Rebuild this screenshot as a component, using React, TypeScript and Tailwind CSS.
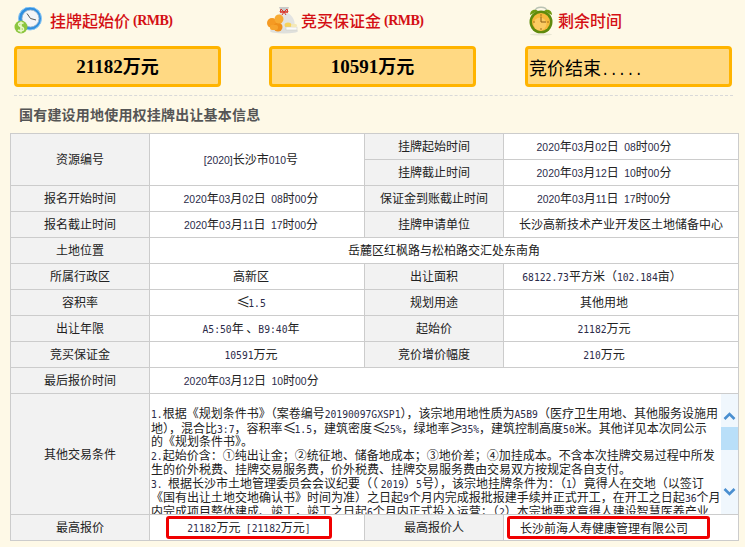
const cjk = "font-['Noto_Sans_CJK_SC',sans-serif]";

// digits and latin are a smaller size than the CJK text in this table
function Mixed({ text, sans }: { text: string; sans?: boolean }) {
  const parts = text.split(/([\x21-\x7e]+|[≤≥])/);
  return (
    <>
      {parts.map((p, i) => {
        if (p === "≤" || p === "≥") {
          return (
            <span key={i} className="inline-block w-[12px] text-center text-[14px] leading-none">
              {p}
            </span>
          );
        }
        if (/^[\x21-\x7e]+$/.test(p)) {
          return (
            <span
              key={i}
              className={
                sans
                  ? "font-['Liberation_Sans',sans-serif] text-[10.4px] text-[#2b2b4a]"
                  : "font-['DejaVu_Sans_Mono',monospace] text-[9.7px] text-[#2b2b4a]"
              }
            >
              {p}
            </span>
          );
        }
        return <span key={i}>{p}</span>;
      })}
    </>
  );
}

function ClockIcon() {
  return (
    <svg width="28" height="27" viewBox="0 0 28 27" className="shrink-0">
      <circle cx="16" cy="11.5" r="11.5" fill="#2f8fe0" />
      <circle cx="16" cy="11.5" r="11.5" fill="none" stroke="#8cc8f5" strokeWidth="1" />
      <circle cx="16.5" cy="11.5" r="8.5" fill="#f4f5f7" stroke="#9db4c8" strokeWidth="0.8" />
      <path d="M16.5 11.5 L13 6.5 M16.5 11.5 L22 13" stroke="#555" strokeWidth="1" fill="none" />
      <circle cx="7" cy="20" r="6.5" fill="#8cc63f" />
      <path d="M9.5 16.5 C7 15 4 16 4.8 18 C5.5 20 9.5 19.5 9.6 22 C9.6 24 6 24.5 4 23 M7 14.5 V25.5" stroke="#e9f7c8" strokeWidth="1.6" fill="none" />
    </svg>
  );
}

function MoneyIcon() {
  return (
    <svg width="33" height="28" viewBox="0 0 33 28" className="shrink-0">
      <path d="M14 7 C10 11 9 18 12 23 H27 C31 17 27 10 22 7 Z" fill="#e3e4e2" />
      <path d="M13 1 H23 L21 6 H15 Z" fill="#c9cac8" />
      <path d="M14 6 H22" stroke="#d9362b" strokeWidth="1.6" />
      <path d="M18 6 L15 3 L14 6 M18 6 L21 3 L22 6 M18 6 L16 9 M18 6 L20 9" stroke="#d9362b" strokeWidth="1" fill="none" />
      <ellipse cx="18" cy="25" rx="14" ry="2.6" fill="#dfe0dc" />
      <circle cx="6" cy="17" r="5" fill="#f59a23" />
      <circle cx="12" cy="21" r="4.5" fill="#ef8f1a" />
      <circle cx="13" cy="13" r="4.5" fill="#f8ab32" />
      <rect x="4" y="19" width="8" height="5" rx="2" fill="#f7a42c" />
      <ellipse cx="22" cy="19" rx="3.5" ry="2.5" fill="#f7d35a" />
      <rect x="20" y="21" width="11" height="3" fill="#fafafa" stroke="#c9c9c0" strokeWidth="0.5" />
      <ellipse cx="28" cy="19.5" rx="3" ry="1.8" fill="#f4e9b8" />
    </svg>
  );
}

function AlarmIcon() {
  return (
    <svg width="26" height="31" viewBox="0 0 26 31" className="shrink-0">
      <path d="M7 6 C8 1 18 1 19 6" stroke="#b9c2b4" strokeWidth="1.3" fill="none" />
      <path d="M2 10 C2 5 7 3.5 10 6 Z" fill="#6f9a10" />
      <path d="M24 10 C24 5 19 3.5 16 6 Z" fill="#6f9a10" />
      <circle cx="13" cy="17" r="11.5" fill="#5f8a0c" />
      <circle cx="13" cy="17" r="9" fill="#f7b93b" />
      <circle cx="12" cy="19" r="6.5" fill="#fbcb62" />
      <path d="M13 9 V11 M13 23 V25 M5 17 H7 M19 17 H21" stroke="#a9701a" strokeWidth="1" />
      <path d="M13 17 V11.5 M13 17 H18" stroke="#8a5a12" strokeWidth="1" fill="none" />
      <ellipse cx="13" cy="29.5" rx="11" ry="1" fill="#e8e6d4" />
    </svg>
  );
}

function Label({ children, rowSpan }: { children: string; rowSpan?: number }) {
  return (
    <td rowSpan={rowSpan} className="h-[26px] border border-[#cccccc] bg-[#f2f2f2] p-0 pb-px text-center text-[12px] text-[#222]">
      {children}
    </td>
  );
}

function Value({
  text,
  sans,
  rowSpan,
  colSpan,
  className = "",
}: {
  text: string;
  sans?: boolean;
  rowSpan?: number;
  colSpan?: number;
  className?: string;
}) {
  return (
    <td
      rowSpan={rowSpan}
      colSpan={colSpan}
      className={`h-[26px] whitespace-pre border border-[#cccccc] bg-white p-0 pb-px text-center text-[12px] text-[#222] ${className}`}
    >
      <Mixed text={text} sans={sans} />
    </td>
  );
}

const conditionLines = [
  "1.根据《规划条件书》（案卷编号20190097GXSP1），该宗地用地性质为A5B9（医疗卫生用地、其他服务设施用",
  "地），混合比3:7，容积率≤1.5，建筑密度≤25%，绿地率≥35%，建筑控制高度50米。其他详见本次同公示",
  "的《规划条件书》。",
  "2.起始价含：①纯出让金；②统征地、储备地成本；③地价差；④加挂成本。不含本次挂牌交易过程中所发",
  "生的价外税费、挂牌交易服务费，价外税费、挂牌交易服务费由交易双方按规定各自支付。",
  "3.  根据长沙市土地管理委员会会议纪要（（ 2019）5号），该宗地挂牌条件为：（1）竟得人在交地（以签订",
  "《国有出让土地交地确认书》时间为准）之日起9个月内完成报批报建手续并正式开工，在开工之日起36个月",
  "内完成项目整体建成、竣工，竣工之日起6个月内正式投入运营；（2）本宗地要求竟得人建设智慧医养产业",
];

export default function App() {
  return (
    <div className={`h-[547px] w-[745px] overflow-hidden bg-[#fef9e7] ${cjk}`}>
      {/* top summary */}
      <div className="flex gap-[48px] pl-[14px]">
        <div className="w-[207px]">
          <div className="flex h-[46px] items-center pb-[6px]">
            <ClockIcon />
            <span className="ml-[8px] text-[16px] font-medium leading-none text-[#d40f14]">挂牌起始价</span>
            <span className="ml-[3px] font-['Liberation_Serif',serif] text-[14px] font-bold tracking-[-0.5px] text-[#d40f14]">(RMB)</span>
          </div>
          <div className="flex h-[41px] items-center justify-center rounded-[4px] border-[3px] border-[#ffb400] bg-[#ffd983] text-[18px] font-bold text-black">
            <span>
              <span className="font-['Liberation_Serif',serif] text-[19px]">21182</span>万元
            </span>
          </div>
        </div>
        <div className="w-[207px]">
          <div className="-ml-[3px] flex h-[46px] items-center pb-[6px]">
            <MoneyIcon />
            <span className="ml-[2px] text-[16px] font-medium leading-none text-[#d40f14]">竞买保证金</span>
            <span className="ml-[3px] font-['Liberation_Serif',serif] text-[14px] font-bold tracking-[-0.5px] text-[#d40f14]">(RMB)</span>
          </div>
          <div className="flex h-[41px] items-center justify-center rounded-[4px] border-[3px] border-[#ffb400] bg-[#ffd983] text-[18px] font-bold text-black">
            <span>
              <span className="font-['Liberation_Serif',serif] text-[19px]">10591</span>万元
            </span>
          </div>
        </div>
        <div className="ml-px w-[207px]">
          <div className="ml-[3px] flex h-[46px] items-center pb-[6px]">
            <AlarmIcon />
            <span className="ml-[4px] text-[16px] font-medium leading-none text-[#d40f14]">剩余时间</span>
          </div>
          <div className="flex h-[41px] items-center rounded-[4px] border-[3px] border-[#ffb400] bg-[#ffd983] pl-px pt-[3px] text-[18px] text-black">
            <span>
              竞价结束<span className="font-['Liberation_Mono',monospace] text-[14px]">.....</span>
            </span>
          </div>
        </div>
      </div>

      <div className="ml-[14px] mt-[8px] w-[719px] border-t border-dashed border-[#d9d9d9]" />

      <div className="h-[37px] pl-[19px] text-[14px] font-bold leading-[36px] tracking-[0.2px] text-[#555]">国有建设用地使用权挂牌出让基本信息</div>

      <table className="ml-[10px] w-[728px] table-fixed border-collapse">
        <colgroup>
          <col className="w-[139px]" />
          <col className="w-[215px]" />
          <col className="w-[139px]" />
          <col className="w-[235px]" />
        </colgroup>
        <tbody>
          <tr>
            <Label rowSpan={2}>资源编号</Label>
            <Value rowSpan={2} text="[2020]长沙市010号" sans className="pr-[12px]" />
            <Label>挂牌起始时间</Label>
            <Value text="2020年03月02日  08时00分" sans className="pr-[34px]" />
          </tr>
          <tr>
            <Label>挂牌截止时间</Label>
            <Value text="2020年03月12日  10时00分" sans className="pr-[34px]" />
          </tr>
          <tr>
            <Label>报名开始时间</Label>
            <Value text="2020年03月02日  08时00分" sans className="pr-[12px]" />
            <Label>保证金到账截止时间</Label>
            <Value text="2020年03月11日  17时00分" sans className="pr-[34px]" />
          </tr>
          <tr>
            <Label>报名截止时间</Label>
            <Value text="2020年03月11日  17时00分" sans className="pr-[12px]" />
            <Label>挂牌申请单位</Label>
            <Value text="长沙高新技术产业开发区土地储备中心" />
          </tr>
          <tr>
            <Label>土地位置</Label>
            <Value colSpan={3} text="岳麓区红枫路与松柏路交汇处东南角" />
          </tr>
          <tr>
            <Label>所属行政区</Label>
            <Value text="高新区" className="pr-[12px]" />
            <Label>出让面积</Label>
            <Value text="68122.73平方米（102.184亩）" className="pr-[38px]" />
          </tr>
          <tr>
            <Label>容积率</Label>
            <Value text="≤1.5" className="pr-[12px]" />
            <Label>规划用途</Label>
            <Value text="其他用地" className="pr-[34px]" />
          </tr>
          <tr>
            <Label>出让年限</Label>
            <Value text="A5:50年 、B9:40年" className="pr-[12px]" />
            <Label>起始价</Label>
            <Value text="21182万元" className="pr-[34px]" />
          </tr>
          <tr>
            <Label>竞买保证金</Label>
            <Value text="10591万元" className="pr-[12px]" />
            <Label>竞价增价幅度</Label>
            <Value text="210万元" className="pr-[34px]" />
          </tr>
          <tr>
            <Label>最后报价时间</Label>
            <td className="h-[26px] whitespace-pre border border-r-0 border-[#cccccc] bg-white p-0 pb-px pr-[12px] text-center text-[12px] text-[#222]">
              <Mixed text="2020年03月12日  10时00分" sans />
            </td>
            <td colSpan={2} className="h-[26px] border border-l-0 border-[#cccccc] bg-white p-0" />
          </tr>
          <tr>
            <Label>其他交易条件</Label>
            <td colSpan={3} className="h-[121px] border border-[#cccccc] bg-white p-0">
              <div className="flex h-[120px] overflow-hidden">
                <div className="min-w-0 flex-1 overflow-hidden pl-px pt-[12px] text-[12px] leading-[14px] text-[#222]">
                  {conditionLines.map((line, i) => (
                    <div key={i} className="h-[14px] whitespace-pre">
                      <Mixed text={line} />
                    </div>
                  ))}
                </div>
                <div className="flex w-[17px] shrink-0 flex-col items-center bg-[#f0f7fd]">
                  <svg width="13" height="9" viewBox="0 0 13 9" className="mt-[18px]">
                    <path d="M1.5 7 L6.5 2 L11.5 7" fill="none" stroke="#4a8fd0" strokeWidth="2.6" />
                  </svg>
                  <div className="mt-[6px] h-[23px] w-full bg-[#b9dff9]" />
                  <svg width="13" height="9" viewBox="0 0 13 9" className="mt-[37px]">
                    <path d="M1.5 2 L6.5 7 L11.5 2" fill="none" stroke="#4a8fd0" strokeWidth="2.6" />
                  </svg>
                </div>
              </div>
            </td>
          </tr>
          <tr>
            <Label>最高报价</Label>
            <td className="h-[26px] border border-[#cccccc] bg-white p-0 text-[12px] text-[#222]">
              <div className="ml-[16px] flex h-[23px] w-[166px] items-center justify-center rounded-[3px] border-[3px] border-[#f00000]">
                <span className="whitespace-pre">
                  <Mixed text="21182万元  [21182万元]" />
                </span>
              </div>
            </td>
            <Label>最高报价人</Label>
            <td className="h-[26px] border border-[#cccccc] bg-white p-0 text-[12px] text-[#222]">
              <div className="ml-[3px] flex h-[23px] w-[203px] items-center rounded-[3px] border-[3px] border-[#f00000] pl-[10px]">
                长沙前海人寿健康管理有限公司
              </div>
            </td>
          </tr>
        </tbody>
      </table>
    </div>
  );
}
